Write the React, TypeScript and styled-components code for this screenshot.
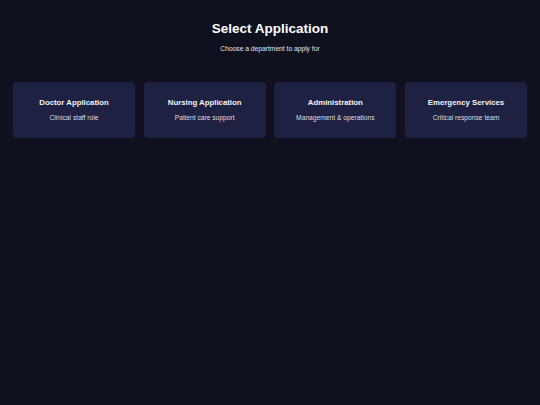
import { createGlobalStyle, styled } from "styled-components";

const departments = [
  { title: "Doctor Application", description: "Clinical staff role" },
  { title: "Nursing Application", description: "Patient care support" },
  { title: "Administration", description: "Management & operations" },
  { title: "Emergency Services", description: "Critical response team" },
];

export default function App() {
  return (
    <>
      <GlobalStyle />
      <Page>
        <Header>
          <Title>Select Application</Title>
          <Subtitle>Choose a department to apply for</Subtitle>
        </Header>
        <CardGrid>
          {departments.map((dept) => (
            <Card key={dept.title}>
              <CardTitle>{dept.title}</CardTitle>
              <CardText>{dept.description}</CardText>
            </Card>
          ))}
        </CardGrid>
      </Page>
    </>
  );
}

const GlobalStyle = createGlobalStyle`
  html, body {
    margin: 0;
    padding: 0;
    background: #0f111f;
  }

  body {
    font-family: "Liberation Sans", Arial, sans-serif;
    min-height: 405px;
  }

  * {
    box-sizing: border-box;
  }
`;

const Page = styled.main`
  min-height: 405px;
  padding: 13px;
  background: #0f111f;
  display: flex;
  flex-direction: column;
`;

const Header = styled.header`
  display: flex;
  flex-direction: column;
  align-items: center;
  gap: 7.5px;
  margin-top: 8px;
`;

const Title = styled.h1`
  margin: 0;
  font-size: 13.5px;
  line-height: 1.2;
  font-weight: 700;
  color: #ffffff;
`;

const Subtitle = styled.p`
  margin: 0;
  font-size: 6.7px;
  line-height: 1.2;
  color: #e4e6ee;
`;

const CardGrid = styled.section`
  display: grid;
  grid-template-columns: repeat(4, 1fr);
  gap: 8.7px;
  margin-top: 29px;
`;

const Card = styled.button`
  display: flex;
  flex-direction: column;
  align-items: center;
  gap: 7.4px;
  height: 56px;
  padding: 16px 8px 15px;
  border: none;
  border-radius: 4px;
  background: #1f2142;
  font-family: inherit;
  cursor: pointer;
`;

const CardTitle = styled.span`
  font-size: 7.8px;
  line-height: 1.2;
  font-weight: 700;
  color: #f2f3f8;
`;

const CardText = styled.span`
  font-size: 6.7px;
  line-height: 1.2;
  color: #dcdee8;
`;
